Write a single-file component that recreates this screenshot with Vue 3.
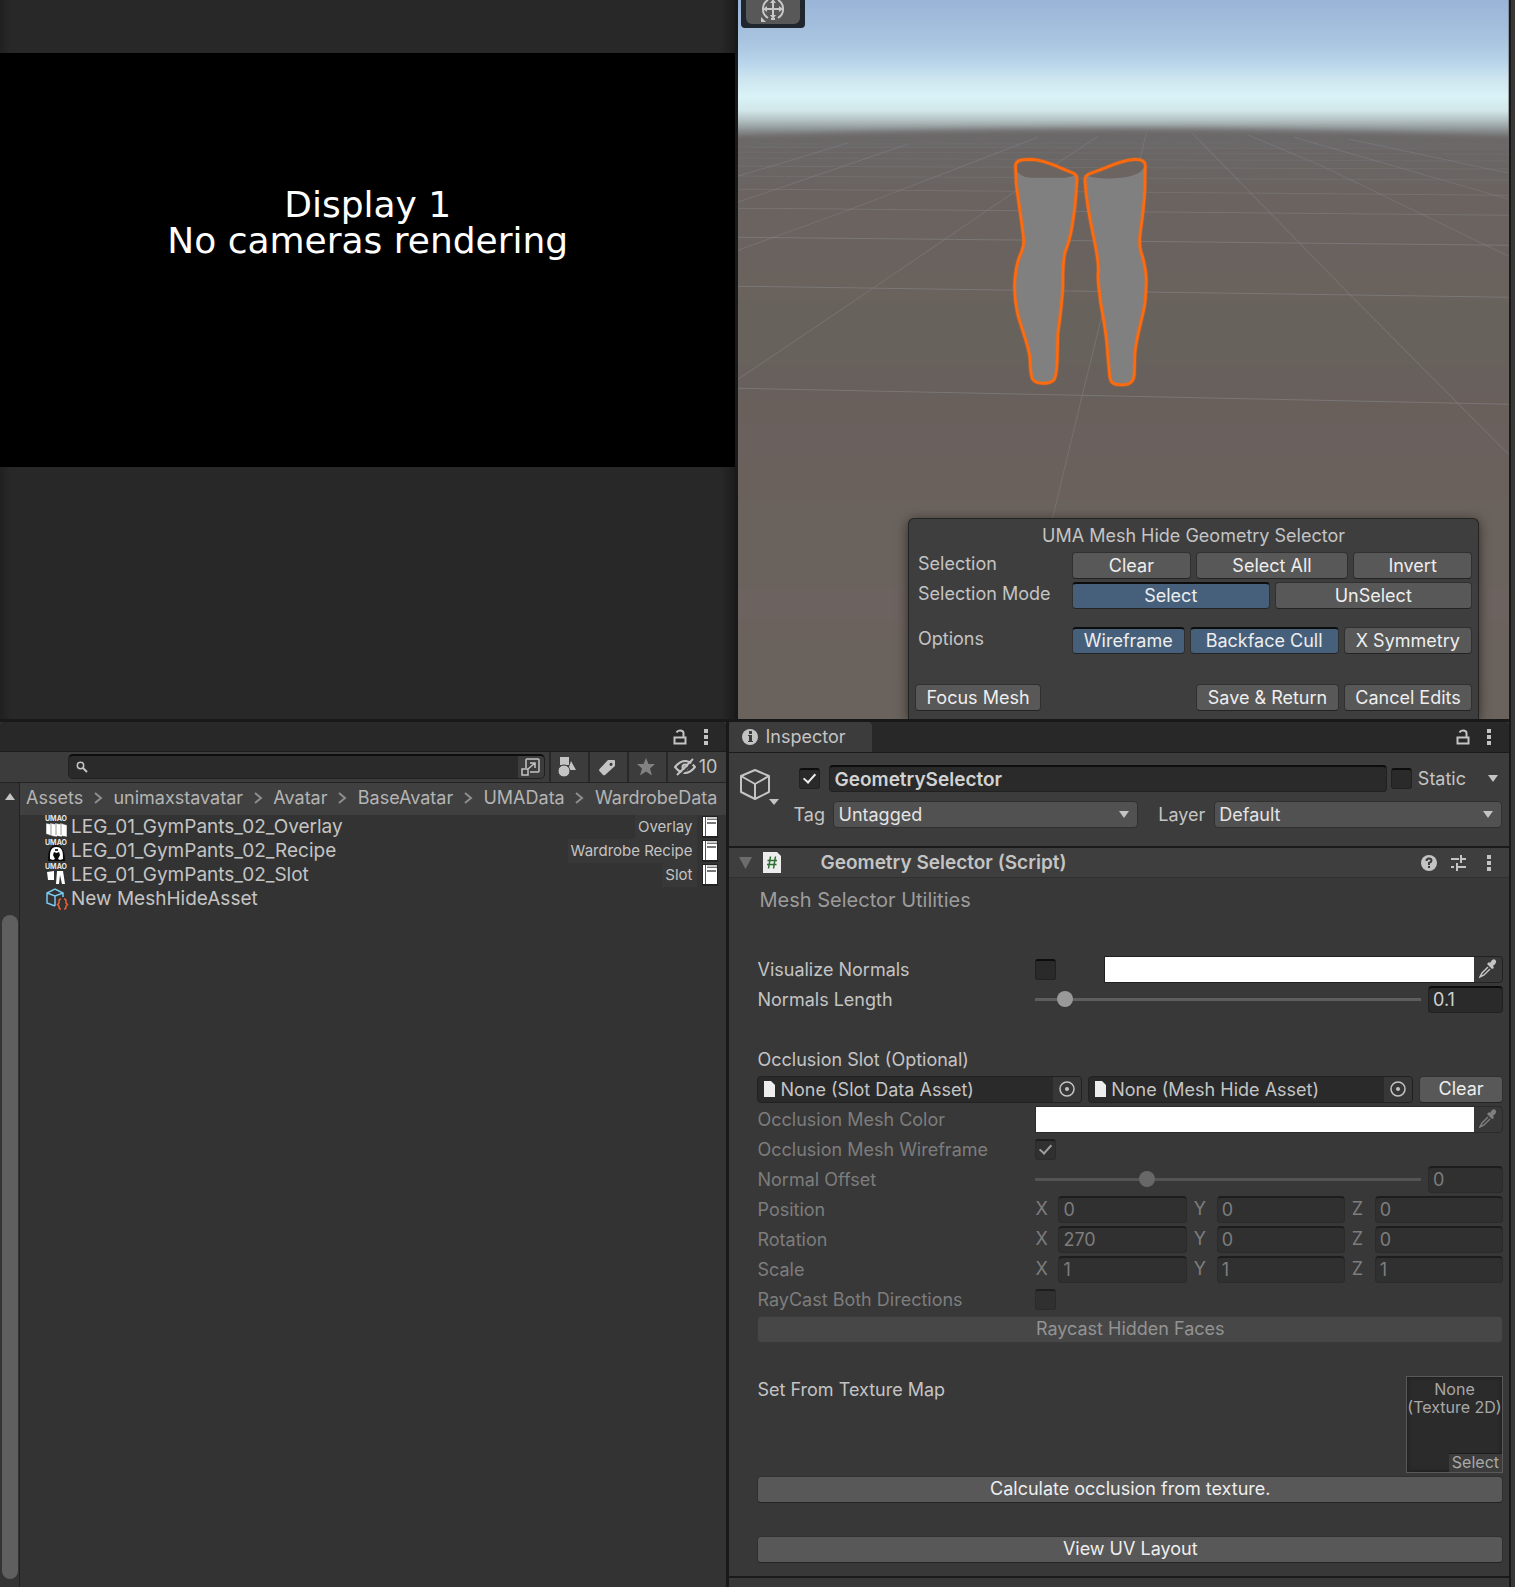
<template>
  <div class="editor">
    <div class="views">
      <section class="game-view">
        <div class="display">
          <p>Display 1<br />No cameras rendering</p>
        </div>
      </section>

      <section class="scene-view">
        <svg class="scene" viewBox="0 0 770 719" preserveAspectRatio="xMidYMin slice" aria-hidden="true">
          <defs>
            <linearGradient id="sky" x1="0" y1="0" x2="0" y2="140" gradientUnits="userSpaceOnUse">
              <stop offset="0" stop-color="#9ab4d8" />
              <stop offset="0.3" stop-color="#a9c5e0" />
              <stop offset="0.44" stop-color="#b7d4ea" />
              <stop offset="0.58" stop-color="#cfe7f0" />
              <stop offset="0.69" stop-color="#d9f3f7" />
              <stop offset="0.79" stop-color="#d1e6e8" />
              <stop offset="0.86" stop-color="#b2c0c2" />
              <stop offset="0.94" stop-color="#868a8b" />
              <stop offset="1" stop-color="#6c686a" />
            </linearGradient>
            <linearGradient id="ground" x1="0" y1="125" x2="0" y2="719" gradientUnits="userSpaceOnUse">
              <stop offset="0" stop-color="#6c686a" />
              <stop offset="0.12" stop-color="#6a6460" />
              <stop offset="0.23" stop-color="#6a625e" />
              <stop offset="0.38" stop-color="#67625b" />
              <stop offset="0.52" stop-color="#6a605d" />
              <stop offset="0.65" stop-color="#6a625c" />
              <stop offset="0.8" stop-color="#6c625e" />
              <stop offset="1" stop-color="#6b625c" />
            </linearGradient>
            <filter id="haze" x="-10%" y="-10%" width="120%" height="120%">
              <feGaussianBlur stdDeviation="3" />
            </filter>
          </defs>
          <rect width="770" height="719" fill="url(#sky)" />
          <path d="M-60 140Q385 118 830 140V800H-60Z" fill="url(#ground)" filter="url(#haze)" />
          <g stroke="#858689" fill="none">
            <path
              v-for="line in gridRows"
              :key="line.left"
              :d="`M0 ${line.left}L770 ${line.right}`"
              :stroke-opacity="line.opacity"
            />
            <path v-for="d in gridRays" :key="d" :d="d" stroke-opacity="0.45" />
          </g>
          <g transform="translate(242 140) scale(0.3333)" stroke-linejoin="round">
            <path :d="leftLeg" fill="#808080" />
            <path d="M107 82C112 60 135 58 155 58C200 60 240 86 284 104C280 108 272 110 255 113H150C125 110 110 100 107 82Z" fill="#6b6461" />
            <path :d="leftLeg" fill="none" stroke="#ff6a0c" stroke-opacity="0.3" stroke-width="13" />
            <path :d="leftLeg" fill="none" stroke="#ff6a0c" stroke-width="8" />
            <path :d="rightLeg" fill="#808080" />
            <path d="M494 78C490 60 480 58 465 58C430 58 390 78 350 93L320 106C330 112 355 115 390 115C450 113 480 105 494 78Z" fill="#6b6461" />
            <path :d="rightLeg" fill="none" stroke="#ff6a0c" stroke-opacity="0.3" stroke-width="13" />
            <path :d="rightLeg" fill="none" stroke="#ff6a0c" stroke-width="8" />
          </g>
        </svg>

        <div class="tool-overlay">
          <button type="button" class="tool" aria-label="Transform tool">
            <svg width="26" height="26" viewBox="0 0 26 26" fill="none" stroke="#c8c8c8" stroke-width="2">
              <path d="M8 4A10.500 10.500 0 0 0 8 22M18 4A10.500 10.500 0 0 1 18 22M11 3H15M11 23H15" />
              <path d="M13 5V21M5 13H21" />
              <path d="M13 3L16 7H10ZM13 23L16 19H10ZM3 13L7 10V16ZM23 13L19 10V16Z" fill="#c8c8c8" stroke="none" />
              <path d="M1 21V26H6Z" fill="#c8c8c8" stroke="none" />
            </svg>
          </button>
        </div>

        <div class="mesh-panel">
          <h2>UMA Mesh Hide Geometry Selector</h2>
          <div class="mesh-row">
            <span class="mesh-label">Selection</span>
            <button type="button" class="btn grow-clear">Clear</button>
            <button type="button" class="btn grow-all">Select All</button>
            <button type="button" class="btn grow-clear">Invert</button>
          </div>
          <div class="mesh-row">
            <span class="mesh-label">Selection Mode</span>
            <button
              v-for="mode in ['Select', 'UnSelect']"
              :key="mode"
              type="button"
              class="btn grow-even"
              :class="{ active: selectionMode === mode }"
              @click="selectionMode = mode"
            >
              {{ mode }}
            </button>
          </div>
          <div class="mesh-row options-row">
            <span class="mesh-label">Options</span>
            <button
              v-for="option in options"
              :key="option.name"
              type="button"
              class="btn"
              :class="[option.size, { active: option.on }]"
              @click="option.on = !option.on"
            >
              {{ option.name }}
            </button>
          </div>
          <div class="mesh-row footer-row">
            <button type="button" class="btn focus">Focus Mesh</button>
            <button type="button" class="btn save">Save &amp; Return</button>
            <button type="button" class="btn cancel">Cancel Edits</button>
          </div>
        </div>
      </section>
    </div>

    <div class="panels">
      <section class="project">
        <div class="tab-bar">
          <span class="spacer"></span>
          <button type="button" class="icon-btn" aria-label="Lock">
            <svg width="14" height="16" viewBox="0 0 14 16" fill="none" stroke="#c4c4c4" stroke-width="2">
              <path d="M1.500 8.500H12.500V14.500H1.500ZM10.500 8V4Q10.500 1.500 7 1.500Q4.500 1.500 3.500 3.500" />
            </svg>
          </button>
          <button type="button" class="icon-btn" aria-label="Menu">
            <svg width="14" height="16" viewBox="0 0 14 16" fill="#c4c4c4">
              <path d="M5 0H9V4H5ZM5 6H9V10H5ZM5 12H9V16H5Z" />
            </svg>
          </button>
        </div>

        <div class="search-bar">
          <div class="search">
            <svg width="12" height="12" viewBox="0 0 12 12" fill="none" stroke="#c4c4c4" stroke-width="1.500">
              <circle cx="4.500" cy="4.500" r="3.200" />
              <path d="M7 7L11 11" stroke-width="2" />
            </svg>
            <input v-model="query" type="text" aria-label="Search" />
            <button type="button" class="search-open" aria-label="Open search">
              <svg width="20" height="20" viewBox="0 0 20 20" fill="none" stroke="#c4c4c4" stroke-width="1.500">
                <path d="M5 11V3Q5 2 6 2H17Q18 2 18 3V14Q18 15 17 15H9M1 12H7V18H1ZM7 12L14 6M9 6H14V11" />
              </svg>
            </button>
          </div>
          <button type="button" class="filter" aria-label="Filter by type">
            <svg width="20" height="20" viewBox="0 0 20 20" fill="#c4c4c4">
              <path d="M2 0H11V8H2ZM13 4L18 13H10Z" />
              <circle cx="6" cy="14" r="6" stroke="#3c3c3c" />
            </svg>
          </button>
          <button type="button" class="filter" aria-label="Filter by label">
            <svg width="18" height="18" viewBox="0 0 18 18" fill="#c4c4c4">
              <path fill-rule="evenodd" d="M10 2L16 2Q17 2 17 3V8L7 17Q6 17.500 5 17L1 12.500Q1 11.500 2 10.500ZM12.500 5A1.500 1.500 0 1 0 14.500 6A1.500 1.500 0 0 0 12.500 5Z" />
            </svg>
          </button>
          <button type="button" class="filter" aria-label="Favorites">
            <svg width="18" height="18" viewBox="0 0 18 18" fill="#828282">
              <path d="M9 0L11.500 6H18L13 10.500L15 17.500L9 13.500L3 17.500L5 10.500L0 6H6.500Z" />
            </svg>
          </button>
          <button type="button" class="filter hidden-count" aria-label="Hidden items">
            <svg width="22" height="18" viewBox="0 0 22 18" fill="none" stroke="#c4c4c4" stroke-width="2">
              <path d="M1 9Q11 -3 21 9Q11 21 1 9Z" />
              <circle cx="11" cy="9" r="2.500" />
              <path d="M5 18L21 3" stroke="#3c3c3c" />
              <path d="M3 17L19 1" />
            </svg>
            <span>10</span>
          </button>
        </div>

        <div class="browser">
          <div class="scrollbar">
            <svg class="scroll-up" width="10" height="7" viewBox="0 0 10 7" fill="#c4c4c4"><path d="M5 0L10 7H0Z" /></svg>
            <div class="thumb"></div>
          </div>
          <div class="files">
            <nav class="crumbs" aria-label="Path">
              <template v-for="(crumb, i) in crumbs" :key="crumb">
                <svg v-if="i" width="9" height="12" viewBox="0 0 9 12" fill="none" stroke="#8e8e8e" stroke-width="2">
                  <path d="M1 1L7 6L1 11" />
                </svg>
                <a href="#">{{ crumb }}</a>
              </template>
            </nav>
            <ul class="assets">
              <li v-for="asset in assets" :key="asset.name">
                <svg v-if="asset.kind !== 'mesh'" class="asset-icon" width="24" height="24" viewBox="0 0 24 24">
                  <text x="0" y="6" class="uma-text">UMAO</text>
                  <path v-if="asset.kind === 'overlay'" d="M1 8L5 9V8L10 9V8L15 9V8L22 10V22L17 21V22L12 21V22L7 21L1 19ZM6 9V20M11 9V20M16 9V20" fill="#fff" stroke="#333" stroke-width="0.500" />
                  <g v-if="asset.kind === 'recipe'">
                    <path d="M11 6C3 7 3 15 3 22H20C20 15 19 7 11 6Z" fill="#0b0b0b" />
                    <path d="M11.500 8C5 8 5 14 5 20L8 21L10 20L8 16L9 13L11.500 14L14 13L15 16L13 20L15 21L18 20C18 14 18 8 11.500 8Z" fill="#fff" />
                    <path d="M10 10H13V12H10Z" fill="#333" />
                  </g>
                  <path v-if="asset.kind === 'slot'" d="M2 9L9 8V17H3ZM12 8H18L20 21H17L15 12L14 21H11Z" fill="#fff" />
                </svg>
                <svg v-else class="asset-icon" width="24" height="24" viewBox="0 0 24 24" fill="none" stroke-width="1.500">
                  <path d="M10 19L2 16V6L10 2L18 6V10M2 6L10 9L18 6M10 9V19" stroke="#7bc8ee" />
                  <path d="M16 12Q14 12 14 14V16L12.500 17.500L14 19V20Q14 22 16 22M19 12Q21 12 21 14V16L22.500 17.500L21 19V20Q21 22 19 22" stroke="#ef6237" />
                </svg>
                <span class="asset-name">{{ asset.name }}</span>
                <template v-if="asset.type">
                  <span class="asset-type">{{ asset.type }}</span>
                  <svg width="16" height="22" viewBox="0 0 16 22">
                    <path d="M0 0H16V22H0Z" fill="#222" />
                    <path d="M1 1H15V20H1Z" fill="#fff" />
                    <path d="M3 1H4V20H3Z" fill="#555" />
                    <path d="M5 3H15V4H5ZM5 6H14V8H5Z" fill="#777" />
                    <path d="M5 1H15V3H5Z" fill="#ccc" />
                  </svg>
                </template>
              </li>
            </ul>
          </div>
        </div>
      </section>

      <section class="inspector">
        <div class="tab-bar">
          <div class="tab">
            <svg width="16" height="16" viewBox="0 0 16 16">
              <circle cx="8" cy="8" r="8" fill="#c4c4c4" />
              <path d="M7 2H10V5H7ZM6 6H10V12H11V13H6V12H7V7H6Z" fill="#3c3c3c" />
            </svg>
            Inspector
          </div>
          <span class="spacer"></span>
          <button type="button" class="icon-btn" aria-label="Lock">
            <svg width="14" height="16" viewBox="0 0 14 16" fill="none" stroke="#c4c4c4" stroke-width="2">
              <path d="M1.500 8.500H12.500V14.500H1.500ZM10.500 8V4Q10.500 1.500 7 1.500Q4.500 1.500 3.500 3.500" />
            </svg>
          </button>
          <button type="button" class="icon-btn" aria-label="Menu">
            <svg width="14" height="16" viewBox="0 0 14 16" fill="#c4c4c4">
              <path d="M5 0H9V4H5ZM5 6H9V10H5ZM5 12H9V16H5Z" />
            </svg>
          </button>
        </div>

        <div class="object-header">
          <svg class="cube" width="42" height="40" viewBox="0 0 42 40" fill="none" stroke="#c4c4c4" stroke-width="2">
            <path d="M16 2L30 8V24L16 31L2 24V8ZM2 8L16 16L30 8M16 16V31" stroke-linejoin="round" />
            <path d="M30 31H40L35 37Z" fill="#c4c4c4" stroke="none" />
          </svg>
          <div class="object-rows">
            <div class="object-row">
              <input v-model="object.active" type="checkbox" class="check active-check" aria-label="Active" />
              <input v-model="object.name" type="text" class="field name" aria-label="Name" />
              <input id="static" v-model="object.isStatic" type="checkbox" class="check" />
              <label for="static" class="static-label">Static</label>
              <button type="button" class="icon-btn static-menu" aria-label="Static options">
                <svg width="10" height="7" viewBox="0 0 10 7" fill="#c4c4c4"><path d="M0 0H10L5 7Z" /></svg>
              </button>
            </div>
            <div class="object-row">
              <label for="tag" class="tag-label">Tag</label>
              <span class="dropdown tag">
                <select id="tag"><option>Untagged</option></select>
              </span>
              <label for="layer" class="layer-label">Layer</label>
              <span class="dropdown layer">
                <select id="layer"><option>Default</option></select>
              </span>
            </div>
          </div>
        </div>

        <div class="component-header">
          <svg width="13" height="12" viewBox="0 0 13 12" fill="#6c6c6c"><path d="M0 0H13L6.500 12Z" /></svg>
          <svg class="script-icon" width="18" height="21" viewBox="0 0 18 21">
            <path d="M0 0H14L18 4V21H0Z" fill="#ededed" />
            <path d="M7.500 4.500L5.500 16.500M12.500 4.500L10.500 16.500M4.500 8.500H14M4 12.500H13.500" stroke="#2c6e2f" stroke-width="1.500" fill="none" />
          </svg>
          <h2>Geometry Selector (Script)</h2>
          <span class="spacer"></span>
          <button type="button" class="icon-btn" aria-label="Help">
            <svg width="16" height="16" viewBox="0 0 16 16" fill="none">
              <circle cx="8" cy="8" r="8" fill="#c4c4c4" />
              <path d="M5.500 6Q5.500 3.500 8 3.500Q10.500 3.500 10.500 5.500Q10.500 7 8 8V10M8 11V13" stroke="#3c3c3c" stroke-width="2" />
            </svg>
          </button>
          <button type="button" class="icon-btn" aria-label="Presets">
            <svg width="16" height="16" viewBox="0 0 16 16" fill="none" stroke="#c4c4c4" stroke-width="2">
              <path d="M0 4H8M10 0V8M10 4H15M0 12H3M6 8V16M6 12H15" />
            </svg>
          </button>
          <button type="button" class="icon-btn" aria-label="Menu">
            <svg width="14" height="16" viewBox="0 0 14 16" fill="#c4c4c4">
              <path d="M5 0H9V4H5ZM5 6H9V10H5ZM5 12H9V16H5Z" />
            </svg>
          </button>
        </div>

        <div class="component">
          <h3>Mesh Selector Utilities</h3>

          <div class="row">
            <label for="normals" class="label">Visualize Normals</label>
            <input id="normals" v-model="normals.visible" type="checkbox" class="check" />
            <div class="color normals-color">
              <input v-model="normals.color" type="color" aria-label="Normals color" />
              <button type="button" aria-label="Pick normals color">
                <svg width="18" height="20" viewBox="0 0 18 20" fill="#c4c4c4">
                  <path d="M11 4L13 1Q16 -1 17 2Q18 4 14 7L15 9L13 10L8 5L10 3Z" />
                  <path d="M9 8L3 14L1 18L5 16L11 10" fill="none" stroke="#c4c4c4" stroke-width="1.500" />
                </svg>
              </button>
            </div>
          </div>
          <div class="row">
            <label for="length" class="label">Normals Length</label>
            <input id="length" v-model.number="normals.length" type="range" min="0" max="1.750" step="any" />
            <input v-model.number="normals.length" type="text" class="field number" aria-label="Normals length value" />
          </div>

          <div class="row section-start">
            <span class="label">Occlusion Slot (Optional)</span>
          </div>
          <div class="row objects">
            <div v-for="slot in slots" :key="slot" class="object-field">
              <svg width="11" height="16" viewBox="0 0 11 16" fill="#ededed"><path d="M0 0H7L11 4V16H0Z" /></svg>
              <input type="text" :value="slot" :aria-label="slot" readonly />
              <button type="button" aria-label="Choose asset">
                <svg width="16" height="16" viewBox="0 0 16 16" fill="none" stroke="#c4c4c4" stroke-width="1.500">
                  <circle cx="8" cy="8" r="7" />
                  <circle cx="8" cy="8" r="2" fill="#c4c4c4" stroke="none" />
                </svg>
              </button>
            </div>
            <button type="button" class="btn clear">Clear</button>
          </div>

          <fieldset disabled>
            <div class="row">
              <label for="mesh-color" class="label">Occlusion Mesh Color</label>
              <div class="color">
                <input id="mesh-color" v-model="occlusion.color" type="color" />
                <button type="button" aria-label="Pick occlusion mesh color">
                  <svg width="18" height="20" viewBox="0 0 18 20" fill="#7f7f7f">
                    <path d="M11 4L13 1Q16 -1 17 2Q18 4 14 7L15 9L13 10L8 5L10 3Z" />
                    <path d="M9 8L3 14L1 18L5 16L11 10" fill="none" stroke="#7f7f7f" stroke-width="1.500" />
                  </svg>
                </button>
              </div>
            </div>
            <div class="row">
              <label for="wireframe" class="label">Occlusion Mesh Wireframe</label>
              <input id="wireframe" v-model="occlusion.wireframe" type="checkbox" class="check" />
            </div>
            <div class="row">
              <label for="offset" class="label">Normal Offset</label>
              <input id="offset" v-model.number="occlusion.offset" type="range" min="-0.390" max="1" step="any" />
              <input v-model.number="occlusion.offset" type="text" class="field number" aria-label="Normal offset value" />
            </div>
            <div v-for="vector in vectors" :key="vector.name" class="row">
              <span class="label">{{ vector.name }}</span>
              <div class="vector">
                <label v-for="(axis, i) in ['X', 'Y', 'Z']" :key="axis">
                  <span>{{ axis }}</span>
                  <input v-model="vector.value[i]" type="text" class="field" />
                </label>
              </div>
            </div>
            <div class="row">
              <label for="both" class="label">RayCast Both Directions</label>
              <input id="both" v-model="occlusion.bothDirections" type="checkbox" class="check" />
            </div>
            <div class="row">
              <button type="button" class="btn wide">Raycast Hidden Faces</button>
            </div>
          </fieldset>

          <div class="texture-row">
            <span class="label">Set From Texture Map</span>
            <div class="texture">
              <span>None (Texture 2D)</span>
              <button type="button">Select</button>
            </div>
          </div>
          <div class="row">
            <button type="button" class="btn wide">Calculate occlusion from texture.</button>
          </div>
          <div class="row section-start">
            <button type="button" class="btn wide">View UV Layout</button>
          </div>
        </div>
      </section>
    </div>
  </div>
</template>

<script setup>
import { reactive, ref } from "vue";

const selectionMode = ref("Select");
const query = ref("");

const options = reactive([
  { name: "Wireframe", on: true, size: "grow-small" },
  { name: "Backface Cull", on: true, size: "grow-large" },
  { name: "X Symmetry", on: false, size: "grow-medium" },
]);

const crumbs = ["Assets", "unimaxstavatar", "Avatar", "BaseAvatar", "UMAData", "WardrobeData"];

const assets = [
  { name: "LEG_01_GymPants_02_Overlay", type: "Overlay", kind: "overlay" },
  { name: "LEG_01_GymPants_02_Recipe", type: "Wardrobe Recipe", kind: "recipe" },
  { name: "LEG_01_GymPants_02_Slot", type: "Slot", kind: "slot" },
  { name: "New MeshHideAsset", kind: "mesh" },
];

const object = reactive({ name: "GeometrySelector", active: true, isStatic: false });
const normals = reactive({ visible: false, color: "#ffffff", length: 0.1 });
const occlusion = reactive({ color: "#ffffff", wireframe: true, offset: 0, bothDirections: false });
const slots = ["None (Slot Data Asset)", "None (Mesh Hide Asset)"];
const vectors = reactive([
  { name: "Position", value: ["0", "0", "0"] },
  { name: "Rotation", value: ["270", "0", "0"] },
  { name: "Scale", value: ["1", "1", "1"] },
]);

// floor grid, nearest line first
const gridRows = [
  { left: 388, right: 404, opacity: 0.6 },
  { left: 286, right: 297, opacity: 0.6 },
  { left: 237, right: 245, opacity: 0.6 },
  { left: 208, right: 215, opacity: 0.5 },
  { left: 189, right: 195, opacity: 0.4 },
  { left: 176, right: 180, opacity: 0.3 },
  { left: 166, right: 169, opacity: 0.3 },
  { left: 158, right: 161, opacity: 0.2 },
  { left: 152, right: 154, opacity: 0.2 },
  { left: 147, right: 149, opacity: 0.2 },
  { left: 143, right: 144, opacity: 0.1 },
];
const gridRays = [
  "M0 379L135 288L276 192L360 136",
  "M0 250L113 209L300 137",
  "M0 202L170 144",
  "M0 176L110 143",
  "M314 519L344 395L363 318L408 133",
  "M770 454L612 295L530 211L454 133",
  "M770 256L584 166L510 135",
  "M770 199L555 137",
  "M770 173L610 139",
];

const leftLeg =
  "M106 75C108 60 125 58 155 58C200 60 240 85 275 97C290 103 291 110 290 125C288 160 286 200 277 250C272 285 265 310 255 335C247 365 248 390 248 440C246 480 240 530 233 580L231 660C230 690 228 705 222 718C210 732 170 734 158 718C150 708 150 680 149 650C143 610 122 560 112 520C103 480 102 450 104 420C106 390 112 360 124 335C130 320 132 310 130 295C126 250 112 170 108 130Z";
const rightLeg =
  "M495 75C494 62 480 58 465 58C430 58 390 78 350 93C325 102 313 105 314 120C317 170 325 220 340 290C350 340 356 365 354 395C350 420 358 450 360 480C366 520 380 580 382 640L388 705C390 730 400 734 425 734C450 734 460 725 462 705L464 640C468 590 488 530 494 490C498 450 500 430 497 400C494 380 490 355 482 335C476 310 478 290 484 250C490 200 496 160 494 120Z";
</script>

<style>
body {
  margin: 0;
  background: #191919;
}
</style>

<style scoped>
.editor {
  display: flex;
  flex-direction: column;
  box-sizing: border-box;
  min-height: 100vh;
  border-right: 4px solid #383838;
  background: #191919;
  color: #c4c4c4;
  font-family: Inter, "Liberation Sans", sans-serif;
  font-size: 18px;
  line-height: 24px;
}

button,
input,
select {
  box-sizing: border-box;
  margin: 0;
  padding: 0;
  border: 0;
  background: none;
  color: inherit;
  font: inherit;
}

svg {
  display: block;
  flex: none;
}

h2,
h3,
p {
  margin: 0;
  font-size: 18px;
  font-weight: 400;
}

.spacer {
  flex: 1;
}

.btn {
  height: 27px;
  border: 1px solid #303030;
  border-bottom-color: #242424;
  border-radius: 4px;
  background: #585858;
  color: #eeeeee;
  white-space: nowrap;
}

.btn.active {
  border-top: 2px solid #0d0d0d;
  background: #46607c;
}

.icon-btn {
  display: flex;
  justify-content: center;
  width: 16px;
}

/* game and scene views */
.views {
  display: flex;
  flex: 1;
  gap: 3px;
  min-height: 560px;
  padding-right: 2px;
}

.game-view {
  flex: 735 1 0;
  padding: 53px 0 252px;
  display: flex;
  box-sizing: border-box;
  background: linear-gradient(to right, #202020, #282828 10px, #282828 calc(100% - 14px), #1c1c1c);
}

.display {
  flex: 1;
  padding-top: 134px;
  background: #000000;
}

.display p {
  color: #ffffff;
  font-family: "DejaVu Sans", sans-serif;
  font-size: 36px;
  line-height: 36px;
  text-align: center;
}

.scene-view {
  position: relative;
  flex: 770 1 0;
  overflow: hidden;
  background: #6b625e;
}

.scene {
  position: absolute;
  width: 100%;
  height: 100%;
}

.tool-overlay {
  position: absolute;
  top: 0;
  left: 3px;
  padding: 0 5px 4px;
  border-radius: 0 0 4px 4px;
  background: #20262e;
}

.tool {
  display: flex;
  align-items: flex-end;
  justify-content: center;
  width: 54px;
  height: 24px;
  padding-bottom: 2px;
  border-radius: 0 0 6px 6px;
  background: #585858;
  overflow: hidden;
}

.mesh-panel {
  position: absolute;
  right: 30px;
  bottom: 0;
  display: flex;
  flex-direction: column;
  gap: 3px;
  box-sizing: border-box;
  width: 571px;
  padding: 5px 6px 8px;
  border: 1px solid #232323;
  border-bottom: 0;
  border-radius: 6px 6px 0 0;
  background: #3e3e3e;
  box-shadow: 0 2px 12px rgba(0, 0, 0, 0.55);
}

.mesh-panel h2 {
  padding-bottom: 1px;
  text-align: center;
}

.mesh-row {
  display: flex;
  gap: 5px;
}

.mesh-label {
  width: 149px;
  padding-left: 3px;
  white-space: nowrap;
}

.mesh-row .btn {
  flex-shrink: 0;
}

.grow-clear {
  flex: 118 0 0;
}

.grow-all {
  flex: 152 0 0;
}

.grow-even {
  flex: 1 0 0;
}

.grow-small {
  flex: 112 0 0;
}

.grow-medium {
  flex: 128 0 0;
}

.grow-large {
  flex: 149 0 0;
}

.options-row {
  padding-top: 15px;
}

.footer-row {
  padding-top: 27px;
}

.focus {
  width: 126px;
  margin-right: auto;
}

.save {
  width: 143px;
}

.cancel {
  width: 128px;
}

/* bottom panels */
.panels {
  display: flex;
  gap: 3px;
  padding: 3px 2px 0 0;
}

.tab-bar {
  display: flex;
  align-items: center;
  gap: 10px;
  height: 29px;
  padding-right: 12px;
  border-bottom: 1px solid #1c1c1c;
  border-radius: 4px 4px 0 0;
  background: #282828;
}

.tab {
  display: flex;
  align-items: center;
  gap: 7px;
  align-self: stretch;
  padding: 0 26px 0 13px;
  border-radius: 4px 4px 0 0;
  background: #3c3c3c;
}

.project {
  display: flex;
  flex: 726 1 0;
  flex-direction: column;
  min-width: 0;
  background: #333333;
}

.search-bar {
  display: flex;
  height: 30px;
  padding-left: 68px;
  border-bottom: 1px solid #232323;
  background: #3c3c3c;
}

.search {
  display: flex;
  flex: 1;
  align-items: center;
  gap: 6px;
  height: 22px;
  margin: 2px 4px 0 0;
  padding-left: 7px;
  border: 1px solid #212121;
  border-top: 2px solid #0d0d0d;
  border-radius: 5px;
  background: #2a2a2a;
}

.search input {
  flex: 1;
  min-width: 0;
}

.search-open {
  width: 26px;
  padding: 0 3px;
  height: 22px;
  border-radius: 0 4px 4px 0;
  background: #3c3c3c;
}

.filter {
  display: flex;
  align-items: center;
  justify-content: center;
  width: 39px;
  padding-right: 4px;
  border-left: 2px solid #282828;
}

.hidden-count {
  gap: 3px;
  width: 60px;
}

.browser {
  display: flex;
  flex: 1;
}

.scrollbar {
  display: flex;
  flex-direction: column;
  align-items: center;
  box-sizing: border-box;
  width: 20px;
  padding: 10px 0 8px;
  border-right: 1px solid #222222;
  background: #343434;
}

.thumb {
  flex: 1;
  width: 16px;
  margin-top: 115px;
  border-radius: 8px;
  background: #5f5f5f;
}

.files {
  flex: 1;
  min-width: 0;
}

.crumbs {
  display: flex;
  align-items: center;
  justify-content: space-between;
  box-sizing: border-box;
  height: 32px;
  padding: 0 9px 2px 6px;
  background: #404040;
}

.crumbs a {
  color: #b4b4b4;
  text-decoration: none;
}

.assets {
  margin: 0;
  padding: 0 8px 0 25px;
  list-style: none;
}

.assets li {
  display: flex;
  align-items: center;
  height: 24px;
}

.asset-icon {
  margin-right: 2px;
}

.uma-text {
  fill: #e8e8e8;
  font-size: 7px;
  font-weight: 700;
}

.asset-name {
  flex: 1;
  font-size: 19px;
}

.asset-type {
  padding: 0 5px 0 3px;
  margin-right: 5px;
  background: #383838;
  font-size: 15px;
}

/* inspector */
.inspector {
  flex: 779 1 0;
  min-width: 0;
  padding-bottom: 9px;
  background: #383838;
}

.inspector .tab-bar {
  height: 30px;
}

.object-header {
  display: flex;
  gap: 12px;
  padding: 12px 7px 18px 10px;
  border-bottom: 2px solid #1a1a1a;
  background: #3c3c3c;
}

.cube {
  margin-top: 3px;
}

.object-rows {
  display: flex;
  flex: 1;
  flex-direction: column;
  gap: 9px;
  min-width: 0;
}

.object-row {
  display: flex;
  align-items: center;
  height: 27px;
}

.check {
  position: relative;
  flex: none;
  width: 21px;
  height: 21px;
  border: 1px solid #212121;
  border-top: 2px solid #0d0d0d;
  border-radius: 3px;
  background: #2a2a2a;
  appearance: none;
}

.check:checked::after {
  position: absolute;
  top: 1px;
  left: 6px;
  width: 5px;
  height: 10px;
  border: solid #eeeeee;
  border-width: 0 2px 2px 0;
  content: "";
  transform: rotate(42deg);
}

.active-check {
  margin-left: 6px;
}

.field {
  height: 27px;
  padding: 0 4px;
  border: 1px solid #212121;
  border-top: 2px solid #0d0d0d;
  border-radius: 4px;
  background: #2a2a2a;
  color: #d2d2d2;
}

.name {
  flex: 1;
  min-width: 0;
  margin: 0 4px 0 9px;
  font-size: 19px;
  font-weight: 600;
}

.static-label {
  margin-left: 6px;
}

.static-menu {
  margin: 0 1px 0 19px;
}

.tag-label {
  width: 40px;
}

.layer-label {
  padding: 0 9px 0 20px;
}

.dropdown {
  position: relative;
  height: 27px;
}

.dropdown::after {
  position: absolute;
  top: 10px;
  right: 9px;
  border: 5px solid transparent;
  border-top: 7px solid #c4c4c4;
  border-bottom: 0;
  content: "";
  pointer-events: none;
}

.dropdown select {
  width: 100%;
  height: 27px;
  padding: 0 4px;
  border: 1px solid #303030;
  border-radius: 4px;
  background: #515151;
  color: #e4e4e4;
  appearance: none;
}

.tag {
  flex: 304 1 0;
}

.layer {
  flex: 287 1 0;
}

.component-header {
  display: flex;
  align-items: center;
  gap: 14px;
  height: 29px;
  padding: 0 12px 0 10px;
  border-bottom: 1px solid #303030;
  background: #3e3e3e;
}

.script-icon {
  margin-left: -3px;
}

.component-header h2 {
  margin-left: 25px;
  font-size: 19px;
  font-weight: 600;
}

.component {
  padding: 0 6px 12px 28px;
  border-bottom: 2px solid #1a1a1a;
}

.component h3 {
  padding: 10px 0 42px 2px;
  color: #9c9c9c;
  font-size: 20px;
}

.row {
  display: flex;
  align-items: center;
  height: 30px;
}

.section-start {
  margin-top: 30px;
}

.label {
  flex: none;
  width: 278px;
  padding-top: 1px;
}

.color {
  display: flex;
  flex: 1;
  box-sizing: border-box;
  height: 27px;
  border: 1px solid #212121;
  border-radius: 0 4px 4px 0;
}

.normals-color {
  margin-left: 48px;
}

.color input {
  flex: 1;
  height: 25px;
  min-width: 0;
  appearance: none;
}

.color input::-webkit-color-swatch-wrapper {
  padding: 0;
}

.color input::-webkit-color-swatch {
  border: 0;
  border-radius: 0;
}

.color button {
  width: 28px;
  padding: 0 5px;
}

input[type="range"] {
  flex: 1;
  min-width: 0;
  height: 16px;
  margin-right: 7px;
  appearance: none;
}

input[type="range"]::-webkit-slider-runnable-track {
  height: 3px;
  background: #5e5e5e;
}

input[type="range"]::-webkit-slider-thumb {
  width: 16px;
  height: 16px;
  margin-top: -7px;
  border-radius: 50%;
  background: #999999;
  appearance: none;
}

.number {
  width: 75px;
}

.objects {
  gap: 6px;
}

.object-field {
  display: flex;
  flex: 1;
  align-items: center;
  box-sizing: border-box;
  min-width: 0;
  height: 27px;
  padding-left: 6px;
  border: 1px solid #212121;
  border-radius: 4px;
  background: #2a2a2a;
}

.object-field input {
  flex: 1;
  min-width: 0;
  padding: 2px 0 0 5px;
}

.object-field button {
  height: 25px;
  padding: 0 6px;
  border-radius: 0 3px 3px 0;
  background: #373737;
}

.clear {
  width: 84px;
}

fieldset {
  margin: 0;
  padding: 0;
  border: 0;
  color: #7d7d7d;
}

fieldset .field,
fieldset .check {
  border-color: #1d1d1d #2b2b2b #2b2b2b;
  background: #303030;
  color: #7d7d7d;
}

fieldset .check:checked::after {
  border-color: #a0a0a0;
}

fieldset .color {
  border-color: #2b2b2b;
}

fieldset .btn {
  border-color: #3a3a3a;
  background: #474747;
  color: #939393;
}

fieldset input[type="range"]::-webkit-slider-runnable-track {
  background: #545454;
}

fieldset input[type="range"]::-webkit-slider-thumb {
  background: #686868;
}

.vector {
  display: flex;
  flex: 1;
  gap: 7px;
}

.vector label {
  display: flex;
  flex: 1;
  align-items: center;
}

.vector span {
  width: 23px;
}

.vector input {
  flex: 1;
  width: 0;
}

.wide {
  flex: 1;
}

.texture-row {
  display: flex;
  align-items: flex-start;
  justify-content: space-between;
  padding: 32px 0 1px;
}

.texture-row .label {
  line-height: 26px;
}

.texture {
  display: flex;
  flex-direction: column;
  align-items: flex-end;
  justify-content: space-between;
  box-sizing: border-box;
  width: 97px;
  height: 97px;
  border: 1px solid #5a5a5a;
  background: #2b2b2b;
  box-shadow: inset 0 0 4px #1a1a1a;
  color: #a8a8a8;
  font-size: 16px;
}

.texture span {
  width: 100%;
  padding-top: 3px;
  line-height: 18px;
  text-align: center;
}

.texture button {
  padding: 0 3px 2px;
  border-top: 1px solid #1c1c1c;
  background: #3c3c3c;
  line-height: 16px;
}
</style>
